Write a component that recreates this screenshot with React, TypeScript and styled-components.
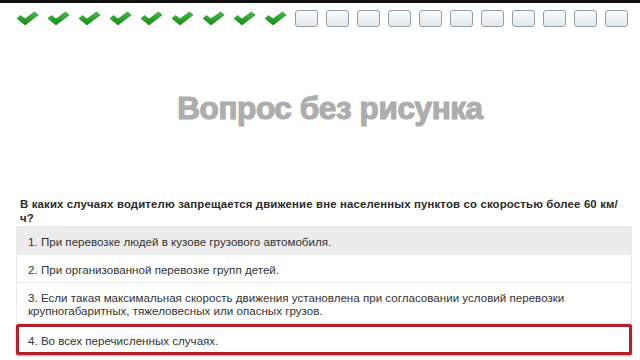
import React from "react";
import styled, { createGlobalStyle } from "styled-components";

const Global = createGlobalStyle`
  html, body { margin: 0; padding: 0; background: #fff; }
  body { width: 640px; height: 360px; overflow: hidden; font-family: "Liberation Sans", Arial, sans-serif; }
`;

const Page = styled.div`
  width: 640px;
  height: 360px;
  display: flex;
  flex-direction: column;
  border-top: 3px solid #111;
  box-sizing: border-box;
`;

const Progress = styled.div`
  display: flex;
  align-items: center;
  gap: 8px;
  padding: 5px 0 0 16px;
  height: 20px;
`;

const Check = styled.div`
  width: 23px;
  height: 16px;
  display: flex;
  align-items: center;
  justify-content: center;
`;

const Box = styled.div`
  width: 21px;
  height: 15px;
  border: 1px solid #8fa0ad;
  border-radius: 3px;
  background: linear-gradient(#fafbfc, #e3e8ec);
`;

const Title = styled.div`
  margin-top: 60px;
  height: 40px;
  line-height: 40px;
  text-align: center;
  font-family: "Liberation Sans", Arial, sans-serif;
  font-weight: 700;
  font-size: 31.5px;
  color: #adadad;
  padding-left: 20px;
  letter-spacing: -0.4px;
  -webkit-text-stroke: 1.2px #adadad;
`;

const Question = styled.div`
  margin: 69px 20px 0 20px;
  font-size: 11.4px;
  font-weight: 700;
  color: #2a2a2a;
  line-height: 14px;
  letter-spacing: 0.15px;
`;

const List = styled.div`
  margin: 2px 8px 0 16px;
  display: flex;
  flex-direction: column;
`;

const Row = styled.div<{ $shade?: boolean; $selected?: boolean }>`
  padding: ${(p) => (p.$selected ? "7px 10px 5px 9px" : "8px 12px 6px 11px")};
  font-size: 11.6px;
  line-height: 13px;
  color: #333;
  background: ${(p) => (p.$shade ? "#ececec" : "#fff")};
  border: ${(p) => (p.$selected ? "3px solid #b3202a" : "1px solid #eaeaea")};
  margin-top: ${(p) => (p.$selected ? "0" : "-1px")};
  border-radius: ${(p) => (p.$selected ? "2px" : "0")};
  box-shadow: ${(p) => (p.$selected ? "0 1px 2px rgba(0,0,0,0.35)" : "none")};
`;

const CheckIcon = () => (
  <svg width="23" height="15" viewBox="0 0 23 15">
    <defs>
      <linearGradient id="cg" x1="0" y1="0" x2="0" y2="1">
        <stop offset="0" stopColor="#3ec43e" />
        <stop offset="1" stopColor="#138a13" />
      </linearGradient>
    </defs>
    <path d="M1 7.5 L4.5 4.5 L9 8 L18.5 1 L22 4 L9 14 Z" fill="url(#cg)" stroke="#118011" strokeWidth="0.6" strokeLinejoin="round" />
  </svg>
);

const answers = [
  "1. При перевозке людей в кузове грузового автомобиля.",
  "2. При организованной перевозке групп детей.",
  "3. Если такая максимальная скорость движения установлена при согласовании условий перевозки крупногабаритных, тяжеловесных или опасных грузов.",
];

export default function App() {
  return (
    <>
      <Global />
      <Page>
        <Progress>
          {Array.from({ length: 9 }).map((_, i) => (
            <Check key={"c" + i}>
              <CheckIcon />
            </Check>
          ))}
          {Array.from({ length: 11 }).map((_, i) => (
            <Box key={"b" + i} />
          ))}
        </Progress>
        <Title>Вопрос без рисунка</Title>
        <Question>
          В каких случаях водителю запрещается движение вне населенных пунктов со скоростью более 60 км/ч?
        </Question>
        <List>
          {answers.map((a, i) => (
            <Row key={i} $shade={i === 0}>
              {a}
            </Row>
          ))}
          <Row $selected>4. Во всех перечисленных случаях.</Row>
        </List>
      </Page>
    </>
  );
}
